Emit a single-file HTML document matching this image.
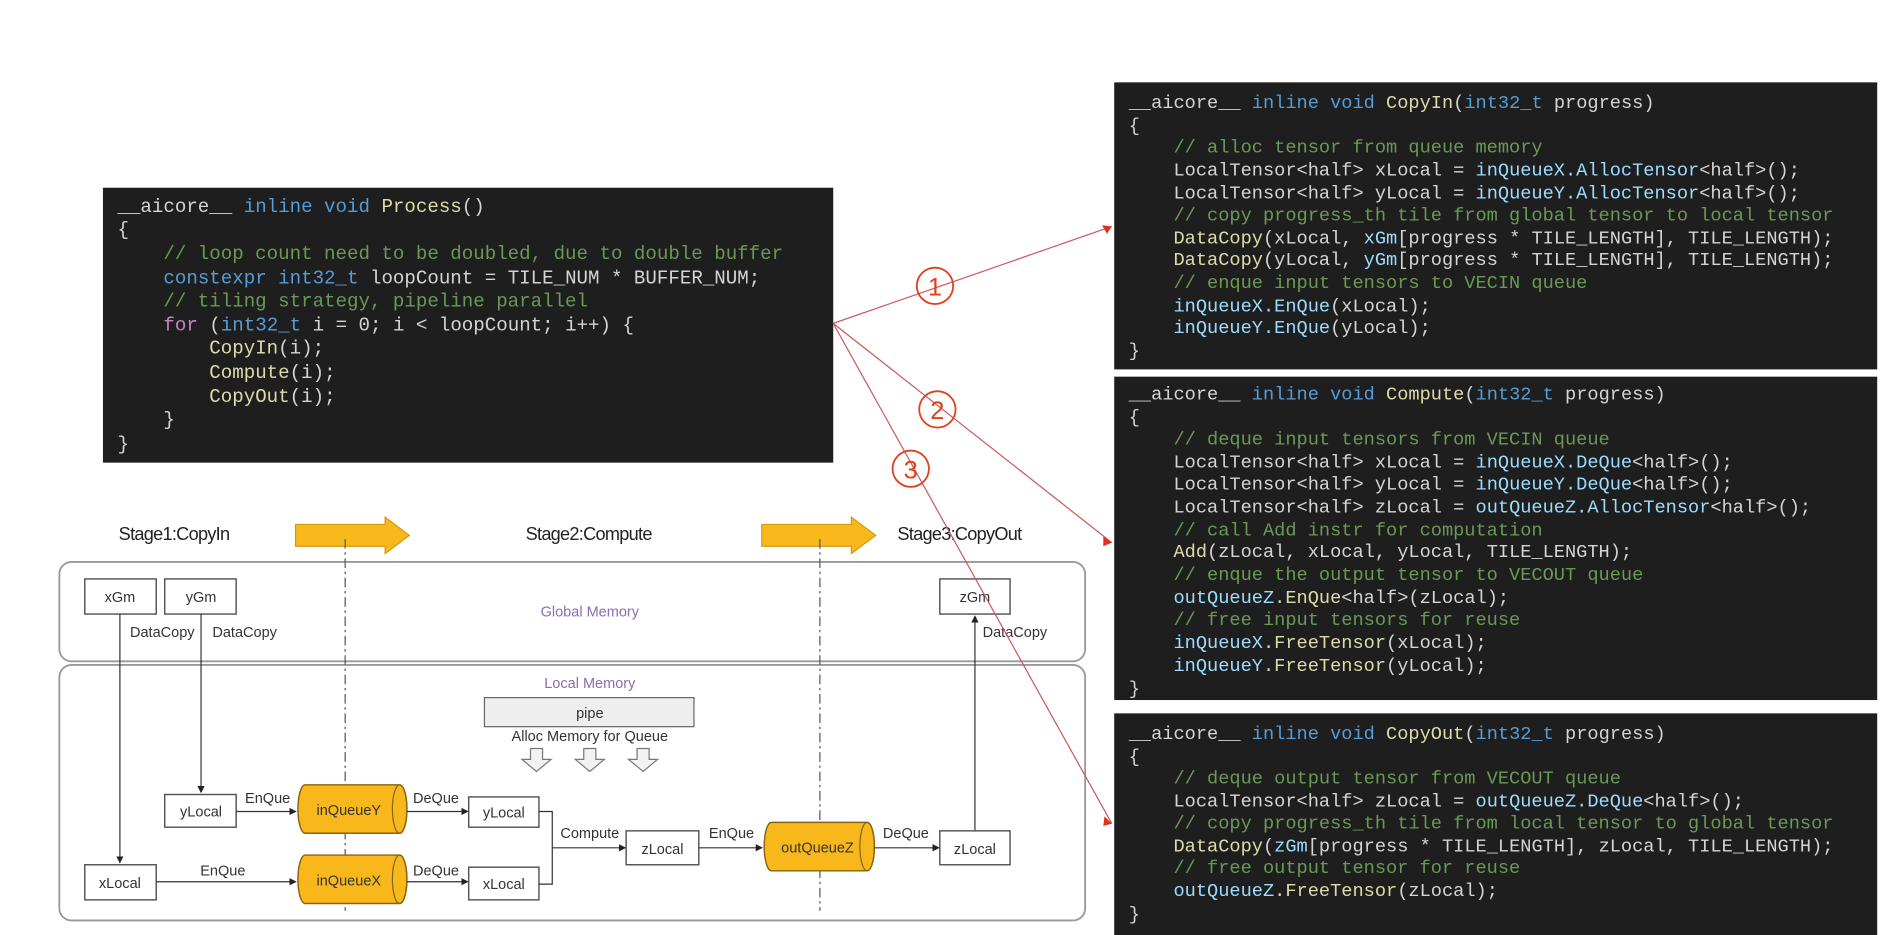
<!DOCTYPE html>
<html><head><meta charset="utf-8"><style>
html,body{margin:0;padding:0;background:#fff;overflow:hidden}
svg{display:block}
.c{font-family:"Liberation Mono",monospace;font-size:15.4px;fill:#d4d4d4;white-space:pre}
.pc{font-size:15.8px}
.k{fill:#569cd6}.f{fill:#dcdcaa}.g{fill:#6a9955}.v{fill:#9cdcfe}.p{fill:#c586c0}
.d{font-family:"Liberation Sans",sans-serif;font-size:12px;fill:#333;text-anchor:middle}
.s{font-family:"Liberation Sans",sans-serif;font-size:15px;fill:#222;letter-spacing:-0.6px}
.b{fill:#fff;stroke:#555;stroke-width:1.2}
.q{fill:#f8b81c;stroke:#8a6410;stroke-width:1.2}
.l{stroke:#333;stroke-width:1;fill:none}
</style></head><body>
<svg width="1899" height="935" viewBox="0 0 1568 772" preserveAspectRatio="none" xmlns="http://www.w3.org/2000/svg" xml:space="preserve">
<defs><marker id="a" markerWidth="6" markerHeight="6" refX="5" refY="3" orient="auto"><path d="M0,0 L6,3 L0,6 z" fill="#222"/></marker></defs>

<!-- Process box -->
<rect x="85" y="155" width="603" height="227" fill="#1e1e1e"/>
<text class="c pc" x="97" y="175"><tspan>__aicore__ </tspan><tspan class="k">inline void </tspan><tspan class="f">Process</tspan>()</text>
<text class="c pc" x="97" y="194">{</text>
<text class="c pc g" x="97" y="214">    // loop count need to be doubled, due to double buffer</text>
<text class="c pc" x="97" y="234">    <tspan class="k">constexpr int32_t</tspan> loopCount = TILE_NUM * BUFFER_NUM;</text>
<text class="c pc g" x="97" y="253">    // tiling strategy, pipeline parallel</text>
<text class="c pc" x="97" y="273">    <tspan class="p">for</tspan> (<tspan class="k">int32_t</tspan> i = 0; i &lt; loopCount; i++) {</text>
<text class="c pc" x="97" y="292">        <tspan class="f">CopyIn</tspan>(i);</text>
<text class="c pc" x="97" y="312">        <tspan class="f">Compute</tspan>(i);</text>
<text class="c pc" x="97" y="332">        <tspan class="f">CopyOut</tspan>(i);</text>
<text class="c pc" x="97" y="351">    }</text>
<text class="c pc" x="97" y="371">}</text>

<!-- Panel 1 -->
<rect x="920" y="68" width="630" height="237" fill="#1e1e1e"/>
<text class="c" x="932" y="89">__aicore__ <tspan class="k">inline void </tspan><tspan class="f">CopyIn</tspan>(<tspan class="k">int32_t</tspan> progress)</text>
<text class="c" x="932" y="108">{</text>
<text class="c g" x="932" y="126">    // alloc tensor from queue memory</text>
<text class="c" x="932" y="145">    LocalTensor&lt;half&gt; xLocal = <tspan class="v">inQueueX.AllocTensor</tspan>&lt;half&gt;();</text>
<text class="c" x="932" y="164">    LocalTensor&lt;half&gt; yLocal = <tspan class="v">inQueueY.AllocTensor</tspan>&lt;half&gt;();</text>
<text class="c g" x="932" y="182">    // copy progress_th tile from global tensor to local tensor</text>
<text class="c" x="932" y="201">    <tspan class="f">DataCopy</tspan>(xLocal, <tspan class="v">xGm</tspan>[progress * TILE_LENGTH], TILE_LENGTH);</text>
<text class="c" x="932" y="219">    <tspan class="f">DataCopy</tspan>(yLocal, <tspan class="v">yGm</tspan>[progress * TILE_LENGTH], TILE_LENGTH);</text>
<text class="c g" x="932" y="238">    // enque input tensors to VECIN queue</text>
<text class="c" x="932" y="257">    <tspan class="v">inQueueX.EnQue</tspan>(xLocal);</text>
<text class="c" x="932" y="275">    <tspan class="v">inQueueY.EnQue</tspan>(yLocal);</text>
<text class="c" x="932" y="294">}</text>

<!-- Panel 2 -->
<rect x="920" y="311" width="630" height="267" fill="#1e1e1e"/>
<text class="c" x="932" y="330">__aicore__ <tspan class="k">inline void </tspan><tspan class="f">Compute</tspan>(<tspan class="k">int32_t</tspan> progress)</text>
<text class="c" x="932" y="349">{</text>
<text class="c g" x="932" y="367">    // deque input tensors from VECIN queue</text>
<text class="c" x="932" y="386">    LocalTensor&lt;half&gt; xLocal = <tspan class="v">inQueueX.DeQue</tspan>&lt;half&gt;();</text>
<text class="c" x="932" y="404">    LocalTensor&lt;half&gt; yLocal = <tspan class="v">inQueueY.DeQue</tspan>&lt;half&gt;();</text>
<text class="c" x="932" y="423">    LocalTensor&lt;half&gt; zLocal = <tspan class="v">outQueueZ.AllocTensor</tspan>&lt;half&gt;();</text>
<text class="c g" x="932" y="442">    // call Add instr for computation</text>
<text class="c" x="932" y="460">    <tspan class="f">Add</tspan>(zLocal, xLocal, yLocal, TILE_LENGTH);</text>
<text class="c g" x="932" y="479">    // enque the output tensor to VECOUT queue</text>
<text class="c" x="932" y="498">    <tspan class="v">outQueueZ</tspan>.<tspan class="f">EnQue</tspan>&lt;half&gt;(zLocal);</text>
<text class="c g" x="932" y="516">    // free input tensors for reuse</text>
<text class="c" x="932" y="535">    <tspan class="v">inQueueX</tspan>.<tspan class="f">FreeTensor</tspan>(xLocal);</text>
<text class="c" x="932" y="554">    <tspan class="v">inQueueY</tspan>.<tspan class="f">FreeTensor</tspan>(yLocal);</text>
<text class="c" x="932" y="573">}</text>

<!-- Panel 3 -->
<rect x="920" y="589" width="630" height="183" fill="#1e1e1e"/>
<text class="c" x="932" y="610">__aicore__ <tspan class="k">inline void </tspan><tspan class="f">CopyOut</tspan>(<tspan class="k">int32_t</tspan> progress)</text>
<text class="c" x="932" y="629">{</text>
<text class="c g" x="932" y="647">    // deque output tensor from VECOUT queue</text>
<text class="c" x="932" y="666">    LocalTensor&lt;half&gt; zLocal = <tspan class="v">outQueueZ.DeQue</tspan>&lt;half&gt;();</text>
<text class="c g" x="932" y="684">    // copy progress_th tile from local tensor to global tensor</text>
<text class="c" x="932" y="703">    <tspan class="f">DataCopy</tspan>(<tspan class="v">zGm</tspan>[progress * TILE_LENGTH], zLocal, TILE_LENGTH);</text>
<text class="c g" x="932" y="721">    // free output tensor for reuse</text>
<text class="c" x="932" y="740">    <tspan class="v">outQueueZ</tspan>.<tspan class="f">FreeTensor</tspan>(zLocal);</text>
<text class="c" x="932" y="759">}</text>

<!-- Diagram -->
<text class="s" x="98" y="446">Stage1:CopyIn</text>
<text class="s" x="434" y="446">Stage2:Compute</text>
<text class="s" x="741" y="446">Stage3:CopyOut</text>
<path d="M244,433 H318 V427 L338,442 L318,457 V451 H244 z" fill="#f8b81c" stroke="#d39a10"/>
<path d="M629,433 H703 V427 L723,442 L703,457 V451 H629 z" fill="#f8b81c" stroke="#d39a10"/>

<rect x="49" y="464" width="847" height="82" rx="10" fill="#fff" stroke="#999" stroke-width="1.5"/>
<rect x="49" y="549" width="847" height="211" rx="10" fill="#fff" stroke="#999" stroke-width="1.5"/>
<line x1="285" y1="445" x2="285" y2="752" stroke="#555" stroke-dasharray="8,3,2,3"/>
<line x1="677" y1="445" x2="677" y2="752" stroke="#555" stroke-dasharray="8,3,2,3"/>

<rect class="b" x="70" y="478" width="59" height="29"/><text class="d" x="99" y="497">xGm</text>
<rect class="b" x="136" y="478" width="59" height="29"/><text class="d" x="166" y="497">yGm</text>
<rect class="b" x="776" y="478" width="58" height="29"/><text class="d" x="805" y="497">zGm</text>
<text class="d" x="487" y="509" style="fill:#8a6fb0">Global Memory</text>
<text class="d" x="134" y="526">DataCopy</text><text class="d" x="202" y="526">DataCopy</text><text class="d" x="838" y="526">DataCopy</text>
<line class="l" x1="99" y1="507" x2="99" y2="712" marker-end="url(#a)"/>
<line class="l" x1="166" y1="507" x2="166" y2="654" marker-end="url(#a)"/>
<line class="l" x1="805" y1="686" x2="805" y2="509" marker-end="url(#a)"/>

<text class="d" x="487" y="568" style="fill:#8a6fb0">Local Memory</text>
<rect x="400" y="576" width="173" height="24" fill="#eee" stroke="#666"/>
<text class="d" x="487" y="593">pipe</text>
<text class="d" x="487" y="612">Alloc Memory for Queue</text>
<path d="M438,618 H448 V627 H455 L443,637 L431,627 H438 z" fill="#f2f2f2" stroke="#777"/>
<path d="M482,618 H492 V627 H499 L487,637 L475,627 H482 z" fill="#f2f2f2" stroke="#777"/>
<path d="M526,618 H536 V627 H543 L531,637 L519,627 H526 z" fill="#f2f2f2" stroke="#777"/>

<rect class="b" x="136" y="656" width="59" height="27"/><text class="d" x="166" y="674">yLocal</text>
<rect class="b" x="70" y="714" width="59" height="29"/><text class="d" x="99" y="733">xLocal</text>
<rect class="b" x="387" y="658" width="58" height="25"/><text class="d" x="416" y="675">yLocal</text>
<rect class="b" x="387" y="716" width="58" height="27"/><text class="d" x="416" y="734">xLocal</text>
<rect class="b" x="517" y="686" width="60" height="28"/><text class="d" x="547" y="705">zLocal</text>
<rect class="b" x="776" y="686" width="58" height="28"/><text class="d" x="805" y="705">zLocal</text>

<path class="q" d="M252,648 H330 A6,20 0 0 1 330,688 H252 A6,20 0 0 1 252,648 z"/><ellipse cx="330" cy="668" rx="6" ry="20" fill="none" stroke="#8a6410"/>
<text class="d" x="288" y="673">inQueueY</text>
<path class="q" d="M252,706 H330 A6,20 0 0 1 330,746 H252 A6,20 0 0 1 252,706 z"/><ellipse cx="330" cy="726" rx="6" ry="20" fill="none" stroke="#8a6410"/>
<text class="d" x="288" y="731">inQueueX</text>
<path class="q" d="M637,679 H716 A6,20 0 0 1 716,719 H637 A6,20 0 0 1 637,679 z"/><ellipse cx="716" cy="699" rx="6" ry="20" fill="none" stroke="#8a6410"/>
<text class="d" x="675" y="704">outQueueZ</text>

<line class="l" x1="195" y1="670" x2="244" y2="670" marker-end="url(#a)"/><text class="d" x="221" y="663">EnQue</text>
<line class="l" x1="129" y1="728" x2="244" y2="728" marker-end="url(#a)"/><text class="d" x="184" y="723">EnQue</text>
<line class="l" x1="336" y1="670" x2="386" y2="670" marker-end="url(#a)"/><text class="d" x="360" y="663">DeQue</text>
<line class="l" x1="336" y1="728" x2="386" y2="728" marker-end="url(#a)"/><text class="d" x="360" y="723">DeQue</text>
<path class="l" d="M445,670 H456 V730 H445 M456,700 H516" marker-end="url(#a)"/><text class="d" x="487" y="692">Compute</text>
<line class="l" x1="577" y1="700" x2="629" y2="700" marker-end="url(#a)"/><text class="d" x="604" y="692">EnQue</text>
<line class="l" x1="722" y1="700" x2="775" y2="700" marker-end="url(#a)"/><text class="d" x="748" y="692">DeQue</text>

<!-- red pointers -->
<g stroke="#c85a5a" stroke-width="1" fill="none">
<line x1="688" y1="267" x2="918" y2="187"/>
<line x1="688" y1="267" x2="918" y2="448"/>
<line x1="688" y1="267" x2="918" y2="680"/>
</g>
<path d="M918,187 l-8,-1 l4,7 z M918,448 l-7,-5 l0,8 z M918,680 l-6,-6 l-1,8 z" fill="#e03020"/>
<g fill="none" stroke="#e04020" stroke-width="1.5">
<circle cx="772" cy="236" r="15"/><circle cx="774" cy="338" r="15"/><circle cx="752" cy="387" r="15"/>
</g>
<g font-family="Liberation Sans,sans-serif" font-size="21" fill="#e04020" text-anchor="middle">
<text x="772" y="244">1</text><text x="774" y="346">2</text><text x="752" y="395">3</text>
</g>
</svg>
</body></html>
